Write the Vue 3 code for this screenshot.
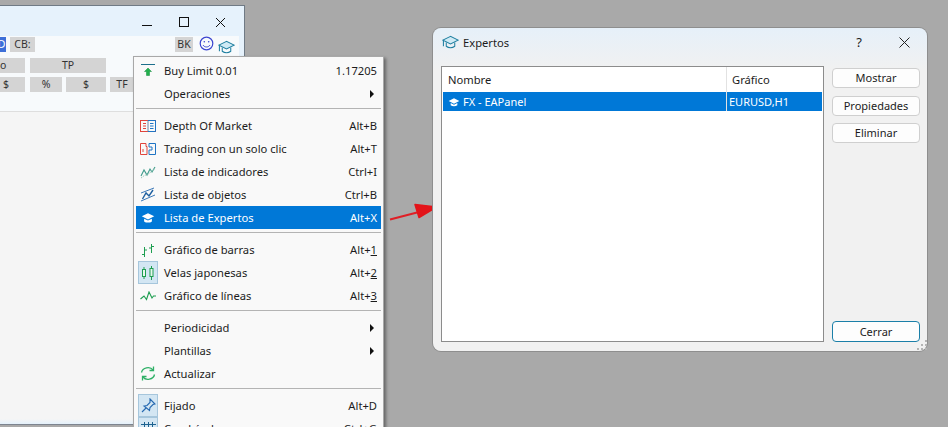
<script setup>
const menu = [
  { label: 'Buy Limit 0.01', right: '1.17205', icon: 'buy' },
  { label: 'Operaciones', arrow: true },
  { sep: true },
  { label: 'Depth Of Market', right: 'Alt+B', icon: 'dom' },
  { label: 'Trading con un solo clic', right: 'Alt+T', icon: 'oneclick' },
  { label: 'Lista de indicadores', right: 'Ctrl+I', icon: 'ind' },
  { label: 'Lista de objetos', right: 'Ctrl+B', icon: 'obj' },
  { label: 'Lista de Expertos', right: 'Alt+X', icon: 'hat', active: true },
  { sep: true },
  { label: 'Gráfico de barras', right: 'Alt+', key: '1', icon: 'bars' },
  { label: 'Velas japonesas', right: 'Alt+', key: '2', icon: 'candles', checked: true },
  { label: 'Gráfico de líneas', right: 'Alt+', key: '3', icon: 'line' },
  { sep: true },
  { label: 'Periodicidad', arrow: true },
  { label: 'Plantillas', arrow: true },
  { label: 'Actualizar', icon: 'refresh' },
  { sep: true },
  { label: 'Fijado', right: 'Alt+D', icon: 'pin', checked: true },
  { label: 'Cuadrícula', right: 'Ctrl+G', icon: 'grid', checked: true }
]
const hatPath = 'M9 2 1 6l8 4 8-4zM4 9v3.5c2.5 2 7.5 2 10 0V9l-5 2.500z'
const gripDots = [[8, 0], [4, 4], [8, 4], [0, 8], [4, 8], [8, 8]]
</script>

<template>
  <div class="desk">
    <section class="terminal">
      <header class="term-title">
        <svg class="wbtn" width="11" height="11" viewBox="0 0 11 11"><path d="M0 8.500h10" stroke="#111" /></svg>
        <svg class="wbtn" width="10" height="10" viewBox="0 0 10 10"><rect x=".5" y=".5" width="9" height="9" fill="none" stroke="#111" /></svg>
        <svg class="wbtn" width="11" height="11" viewBox="0 0 11 11"><path d="M1 1l9 9M10 1l-9 9" stroke="#111" /></svg>
      </header>
      <div class="term-tools">
        <div class="tool-row first">
          <span class="chip blue">D</span>
          <span class="chip cb">CB:</span>
          <span class="grow"></span>
          <span class="chip bk">BK</span>
          <svg class="smile" width="15" height="15" viewBox="0 0 15 15" fill="none" stroke="#3a45d0">
            <circle cx="7.500" cy="7.500" r="6.300" stroke-width="1.200" />
            <circle cx="5.300" cy="5.700" r=".8" fill="#3a45d0" stroke="none" />
            <circle cx="9.700" cy="5.700" r=".8" fill="#3a45d0" stroke="none" />
            <path d="M4 9c1.500 2.600 5.500 2.600 7 0" />
          </svg>
          <svg class="hat-top" width="17" height="15" viewBox="0 0 18 15" fill="none" stroke="#1f7fa0" stroke-width="1.100">
            <path d="M9 1 1 5l8 4 8-4z" fill="#cfeaf5" />
            <path d="M4.500 7.500v4c2.500 2 6.500 2 9 0v-4" />
            <path d="M1.500 5.500v6" />
          </svg>
        </div>
        <div class="tool-row second">
          <span class="chip c-o o-text">o</span>
          <span class="chip c-tp">TP</span>
        </div>
        <div class="tool-row third">
          <span class="chip c-o d-text">$</span>
          <span class="chip c-p">%</span>
          <span class="chip c-d">$</span>
          <span class="chip c-tf">TF</span>
        </div>
      </div>
      <div class="term-body"></div>
      <div class="term-foot"></div>
    </section>

    <nav class="menu">
      <template v-for="(it, i) in menu" :key="i">
        <div v-if="it.sep" class="sep"></div>
        <div v-else class="item" :class="{ active: it.active }">
          <span class="slot" :class="{ checked: it.checked }">
            <svg v-if="it.icon === 'buy'" width="16" height="16" viewBox="0 0 16 16">
              <path d="M1 1.500h14" stroke="#1d6f8c" />
              <path d="M8 5 4.500 8.500h2v4h3v-4h2z" fill="#22b14c" stroke="#0f8a3a" stroke-width=".5" />
            </svg>
            <svg v-else-if="it.icon === 'dom'" width="16" height="14" viewBox="0 0 16 14" fill="none" stroke-width="1">
              <rect x=".5" y="1.500" width="15" height="11" stroke="#e0443c" />
              <path d="M3 4.500h3M3 7h3M3 9.500h3" stroke="#e0443c" />
              <path d="M8 1.500v11" stroke="#6f86a8" />
              <path d="M10 4.500h3.500M10 7h3.500M10 9.500h3.500" stroke="#1f74c4" />
              <path d="M8 1.500h7.500v11H8" stroke="#1f74c4" />
            </svg>
            <svg v-else-if="it.icon === 'oneclick'" width="16" height="14" viewBox="0 0 16 14" fill="none">
              <path d="M.5 1.500h5.500v3h1v8H.5z" stroke="#e0443c" />
              <path d="M9 1.500h6.500v11H9V8h3V5H9z" stroke="#1f74c4" />
              <path d="M3 7v3" stroke="#e0443c" />
            </svg>
            <svg v-else-if="it.icon === 'ind'" width="16" height="14" viewBox="0 0 16 14" fill="none">
              <path d="M1 11 4 5l3 5 3-6 2 3 3-5" stroke="#3d9a8a" stroke-width="1.100" />
              <path d="M1 13c2-1 3-3 5-3s3-2 5-3 2-3 4-3" stroke="#9ac8b8" stroke-dasharray="1.500 1" />
            </svg>
            <svg v-else-if="it.icon === 'obj'" width="16" height="15" viewBox="0 0 16 15" fill="none">
              <path d="M1 6 14 1M1 14 15 8" stroke="#3b78b8" />
              <path d="M2.500 12 6 6l3 3 4-6" stroke="#1d5fa0" stroke-width="1.400" />
            </svg>
            <svg v-else-if="it.icon === 'hat'" width="14" height="13" viewBox="0 0 18 15">
              <path :d="hatPath" fill="#fff" />
            </svg>
            <svg v-else-if="it.icon === 'bars'" width="16" height="14" viewBox="0 0 16 14" fill="none" stroke="#1e9e50">
              <path d="M4.500 4v10M2 11.500h2.500M4.500 7H7" />
              <path d="M11.500 1v9M9 5h2.500M11.500 3.500H14" />
            </svg>
            <svg v-else-if="it.icon === 'candles'" width="14" height="14" viewBox="0 0 14 14" fill="none" stroke="#1e9e50">
              <rect x="1.500" y="3.500" width="3" height="7" fill="#e8f7ee" />
              <path d="M3 1v2.500M3 10.500V13" />
              <rect x="9" y="2.500" width="3" height="8" fill="#e8f7ee" />
              <path d="M10.500 0v2.500M10.500 10.500V14" />
            </svg>
            <svg v-else-if="it.icon === 'line'" width="16" height="10" viewBox="0 0 16 10" fill="none" stroke="#1e9e50" stroke-width="1.100">
              <path d="M.5 8 4 5l2.500 3.500L9 1l3 6 1.500-2H16" />
            </svg>
            <svg v-else-if="it.icon === 'refresh'" width="16" height="15" viewBox="0 0 16 15" fill="none" stroke="#2eb066" stroke-width="1.300">
              <path d="M1.500 6.500C2.500 1.500 10 0 13 4" />
              <path d="M9.500 4.500h4v-4" />
              <path d="M14.500 8.500c-1 5-8.500 6.500-11.500 2.500" />
              <path d="M6.500 10.500h-4v4" />
            </svg>
            <svg v-else-if="it.icon === 'pin'" width="15" height="15" viewBox="0 0 15 15" fill="none" stroke="#2468b0" stroke-width="1.100">
              <path d="M9 1l5 5-2 .5-3 3-.5 3L3 8l3-.5 3-3z" />
              <path d="M5 10 1 14" />
            </svg>
            <svg v-else-if="it.icon === 'grid'" width="15" height="14" viewBox="0 0 15 14" fill="none" stroke="#1d6290">
              <path d="M0 2.500h15M0 6.500h15M0 10.500h15M3.500 0v14M7.500 0v14M11.500 0v14" />
            </svg>
          </span>
          <span class="label">{{ it.label }}</span>
          <span v-if="it.right" class="short">{{ it.right }}<u v-if="it.key">{{ it.key }}</u></span>
          <span v-if="it.arrow" class="arrow"></span>
        </div>
      </template>
    </nav>

    <svg class="pointer" width="50" height="20" viewBox="0 0 50 20">
      <path d="M1 17.500 30 10" stroke="#df1f26" stroke-width="2" />
      <path d="M47.500 5 26 2.500 30 15.500z" fill="#e3141a" stroke="#e3141a" stroke-linejoin="round" stroke-width="1.500" />
    </svg>

    <section class="dialog">
      <header class="dlg-title">
        <svg class="dlg-hat" width="17" height="15" viewBox="0 0 18 15" fill="none" stroke="#1f7fa0" stroke-width="1.100">
          <path d="M9 1 1 5l8 4 8-4z" fill="#cfeaf5" />
          <path d="M4.500 7.500v4c2.500 2 6.500 2 9 0v-4" />
          <path d="M1.500 5.500v6" />
        </svg>
        <span class="dlg-name">Expertos</span>
        <span class="help">?</span>
        <svg class="dlg-x" width="11" height="11" viewBox="0 0 11 11"><path d="M.5.500l10 10M10.500.500l-10 10" stroke="#222" /></svg>
      </header>
      <div class="dlg-main">
        <div class="list">
          <div class="list-head">
            <span class="col-a">Nombre</span>
            <span class="col-b">Gráfico</span>
          </div>
          <div class="list-row">
            <span class="col-a">
              <svg width="12" height="10" viewBox="0 0 18 15"><path :d="hatPath" fill="#fff" /></svg>
              FX - EAPanel
            </span>
            <span class="col-b">EURUSD,H1</span>
          </div>
        </div>
        <div class="btns">
          <button class="btn">Mostrar</button>
          <button class="btn gap8">Propiedades</button>
          <button class="btn gap7">Eliminar</button>
          <span class="grow"></span>
          <button class="btn primary">Cerrar</button>
        </div>
      </div>
      <svg class="grip" width="10" height="10" viewBox="0 0 10 10">
        <rect v-for="(d, i) in gripDots" :key="i" :x="d[0]" :y="d[1]" width="2" height="2" fill="#b4b4b4" />
      </svg>
    </section>
  </div>
</template>

<style scoped>
.desk {
  position: relative;
  width: 948px;
  height: 427px;
  overflow: hidden;
  background: #a9a9a9;
  font-family: "Noto Sans", "Open Sans", sans-serif;
  font-size: 11.200px;
  color: #1c1c1c;
}
.grow { flex: 1; }

.terminal {
  position: absolute;
  left: 0;
  top: 5px;
  width: 245px;
  height: 420px;
  box-sizing: border-box;
  border-top: 1px solid #6f7a85;
  border-right: 1px solid #6f7a85;
  border-bottom: 1px solid #7d8590;
  display: flex;
  flex-direction: column;
  background: #f5f5f5;
}
.term-title {
  height: 30px;
  flex: none;
  background: #e6f2fc;
  display: flex;
  align-items: center;
  justify-content: flex-end;
  gap: 26px;
  padding: 2px 18px 0 0;
  box-sizing: border-box;
}
.wbtn { display: block; }
.term-tools {
  height: 76px;
  flex: none;
  box-sizing: border-box;
  background: #f7fafc;
  border-bottom: 1px solid #dedede;
  border-right: 5px solid #e6f2fc;
  padding-top: 1px;
}
.tool-row { display: flex; }
.first { height: 15px; align-items: flex-start; padding-right: 4px; }
.second { margin-top: 6px; gap: 5px; }
.third { margin-top: 4px; gap: 4px; }
.chip {
  height: 15px;
  line-height: 15px;
  background: #d4d4d4;
  text-align: center;
  font-size: 10.500px;
  color: #333;
  overflow: hidden;
}
.blue { width: 6px; background: #3d6fd8; color: #fff; text-indent: -3px; }
.cb { width: 25px; margin-left: 4px; }
.bk { width: 18px; }
.smile { margin-left: 6px; margin-top: -1px; }
.hat-top { margin-left: 4px; margin-top: 3px; }
.c-o { width: 25px; }
.o-text { text-align: left; padding-left: 0; }
.d-text { text-align: left; text-indent: 3px; }
.c-tp { width: 76px; }
.c-p { width: 32px; margin-left: 1px; }
.c-d { width: 40px; }
.c-tf { width: 24px; }
.term-body { flex: 1; }
.term-foot { height: 5px; background: linear-gradient(#f5f5f5, #e4f1fb); flex: none; }

.menu {
  position: absolute;
  left: 133px;
  top: 56px;
  width: 251px;
  height: 390px;
  box-sizing: border-box;
  background: #f9f9f9;
  border: 1px solid #a8a8a8;
  padding: 2px;
  box-shadow: 2px 2px 3px rgba(0, 0, 0, 0.4);
}
.item {
  height: 23px;
  display: flex;
  align-items: center;
  padding-left: 2px;
  padding-right: 4px;
}
.item.active { background: #0078d7; color: #fff; }
.slot {
  width: 20px;
  height: 23px;
  flex: none;
  box-sizing: border-box;
  display: flex;
  align-items: center;
  justify-content: center;
  margin-right: 6px;
}
.slot.checked { background: #d3e6f3; border: 1px solid #a6c6dc; }
.label { flex: 1; white-space: nowrap; padding-bottom: 1px; }
.short { white-space: nowrap; padding-bottom: 1px; }
.arrow {
  width: 0;
  height: 0;
  margin-right: 3px;
  border-left: 4px solid #111;
  border-top: 4px solid transparent;
  border-bottom: 4px solid transparent;
}
.sep {
  height: 1px;
  margin: 3px 0 5px;
  background: #b4b4b4;
}

.pointer {
  position: absolute;
  left: 389px;
  top: 202px;
}

.dialog {
  position: absolute;
  left: 433px;
  top: 28px;
  width: 494px;
  height: 323px;
  box-sizing: border-box;
  border-radius: 8px;
  background: linear-gradient(#e6f0f9 0, #f1f1f1 42px);
  box-shadow: 0 0 0 1px #8e8e8e;
  padding: 0 7px 9px 8px;
  display: flex;
  flex-direction: column;
}
.dlg-title {
  height: 38px;
  flex: none;
  display: flex;
  align-items: center;
  padding-bottom: 10px;
  box-sizing: border-box;
}
.dlg-hat { margin-left: 1px; margin-right: 4px; }
.dlg-name { flex: 1; }
.help { margin-right: 37px; font-size: 13px; }
.dlg-x { margin-right: 10px; }
.dlg-main { flex: 1; display: flex; gap: 8px; min-height: 0; }
.list {
  width: 383px;
  flex: none;
  box-sizing: border-box;
  background: #fff;
  border: 1px solid #8c8c8c;
  padding: 0 1px;
}
.list-head {
  height: 25px;
  display: flex;
  align-items: center;
}
.list-row {
  height: 19px;
  display: flex;
  align-items: center;
  background: #0078d7;
  color: #fff;
  font-size: 11px;
}
.col-a {
  width: 284px;
  height: 100%;
  box-sizing: border-box;
  padding-left: 5px;
  display: flex;
  align-items: center;
  gap: 3px;
  border-right: 1px solid #e2e2e2;
}
.col-b { padding-left: 2px; }
.list-head .col-b { padding-left: 5px; }
.btns {
  width: 88px;
  flex: none;
  display: flex;
  flex-direction: column;
  padding-top: 2px;
  box-sizing: border-box;
}
.btn {
  height: 20px;
  padding: 0 0 1px;
  flex: none;
  box-sizing: border-box;
  font: inherit;
  font-size: 11px;
  color: #1c1c1c;
  background: #fdfdfd;
  border: 1px solid #cfcfcf;
  border-radius: 4px;
}
.gap8 { margin-top: 8px; }
.gap7 { margin-top: 7px; }
.primary { height: 21px; border: 1px solid #1b7fa8; }
.grip { position: absolute; right: 0; bottom: 1px; }
</style>
